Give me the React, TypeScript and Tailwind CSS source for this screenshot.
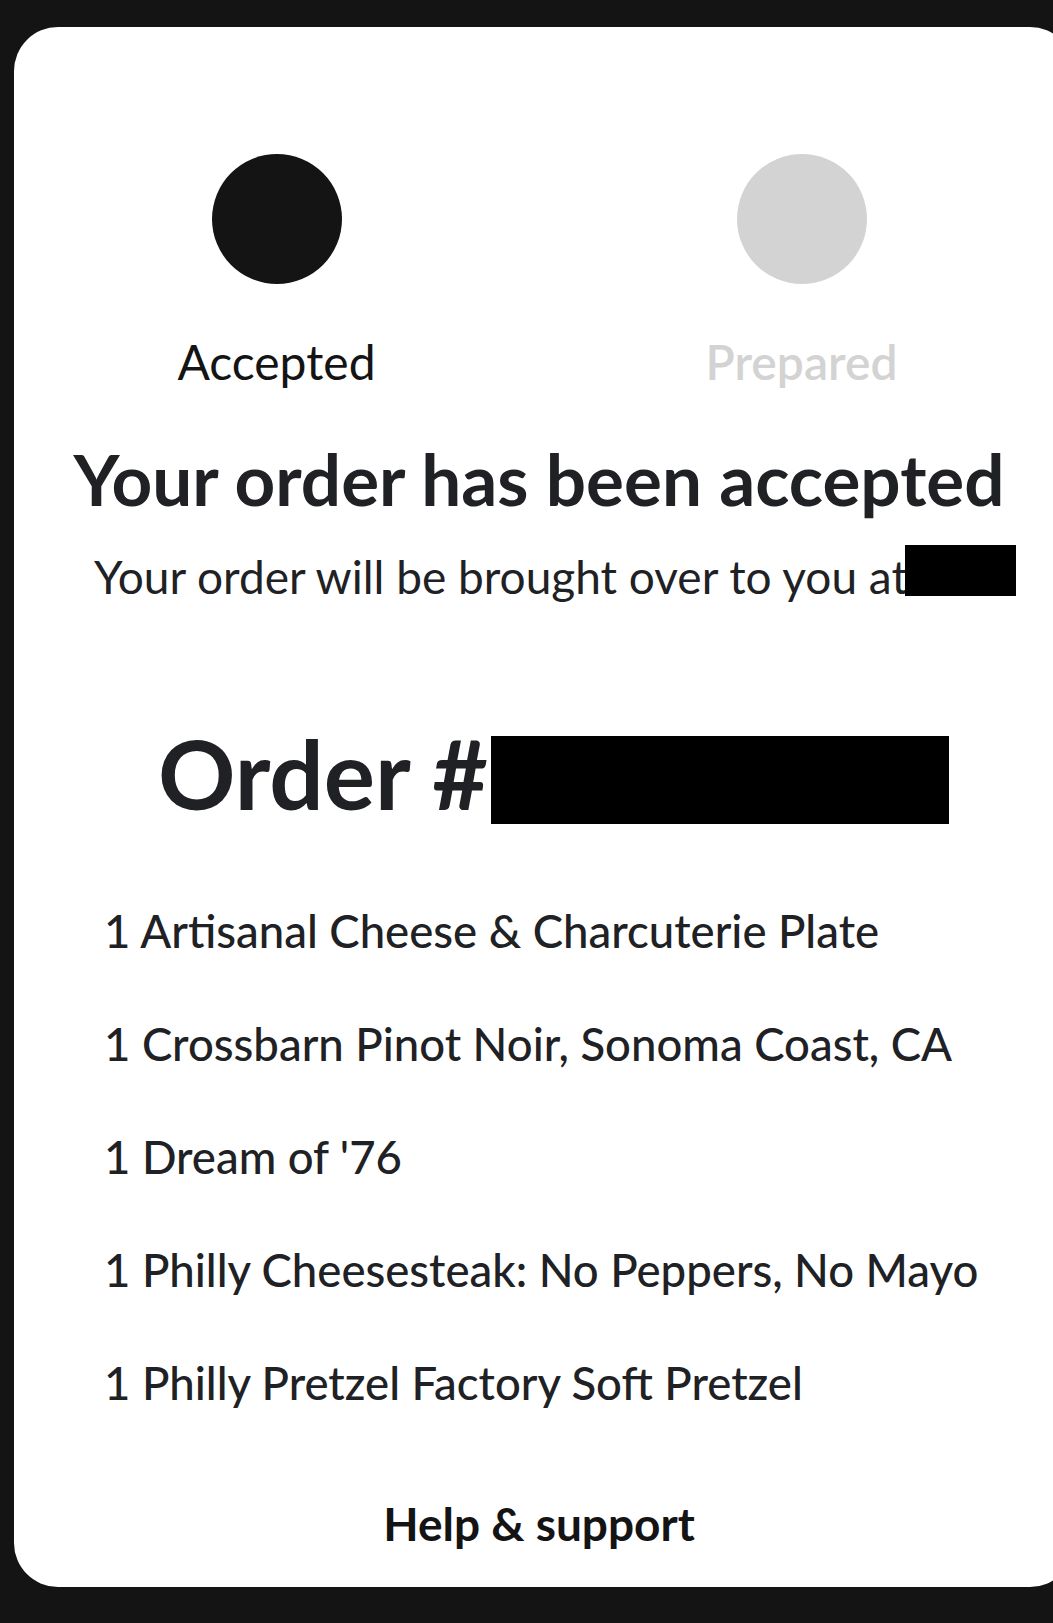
import React from 'react';

const items = [
  "1 Artisanal Cheese & Charcuterie Plate",
  "1 Crossbarn Pinot Noir, Sonoma Coast, CA",
  "1 Dream of '76",
  "1 Philly Cheesesteak: No Peppers, No Mayo",
  "1 Philly Pretzel Factory Soft Pretzel",
];

const Step: React.FC<{ label: string; done: boolean }> = ({ label, done }) => (
  <div className="flex flex-col items-center">
    <div className={`w-[130px] h-[130px] rounded-full ${done ? 'bg-[#141414]' : 'bg-[#d3d3d3]'}`} />
    <span className={`mt-[52px] text-[48px] leading-[52px] ${done ? 'text-[#141414]' : 'text-[#d3d3d3] font-semibold'}`}>
      {label}
    </span>
  </div>
);

export default function App() {
  return (
    <div
      className="w-full h-[1623px] bg-[#141414] overflow-hidden pt-[27px] pl-[14px]"
      style={{ fontFamily: 'Lato, "Noto Sans", sans-serif' }}
    >
      <div className="w-[1060px] h-[1560px] bg-white rounded-[44px] flex flex-col text-[#202124]">
        <div className="w-[1050px] grid grid-cols-2 pt-[127px]">
          <Step label="Accepted" done />
          <Step label="Prepared" done={false} />
        </div>

        <h1 className="w-[1050px] mt-[51px] text-center text-[71px] leading-[80px] font-bold">
          Your order has been accepted
        </h1>

        <div className="flex items-center pl-[80px] mt-[30px]">
          <span className="text-[46px] leading-[56px]">Your order will be brought over to you at</span>
          <span className="w-[111px] h-[51px] -mt-[7px] mb-[7px] -ml-[3px] bg-black" />
        </div>

        <div className="flex items-center pl-[144px] mt-[118px]">
          <span className="text-[96px] leading-[100px] font-bold">Order #</span>
          <span className="ml-[3px] mt-[7px] -mb-[7px] w-[458px] h-[88px] bg-black" />
        </div>

        <ul className="pl-[90px] mt-[79px] flex flex-col gap-[55px]">
          {items.map((it) => (
            <li key={it} className="text-[45.5px] leading-[58px] font-medium">
              {it}
            </li>
          ))}
        </ul>

        <div className="w-[1050px] mt-[83px] text-center text-[46px] leading-[58px] font-bold text-[#141414]">
          Help &amp; support
        </div>
      </div>
    </div>
  );
}
